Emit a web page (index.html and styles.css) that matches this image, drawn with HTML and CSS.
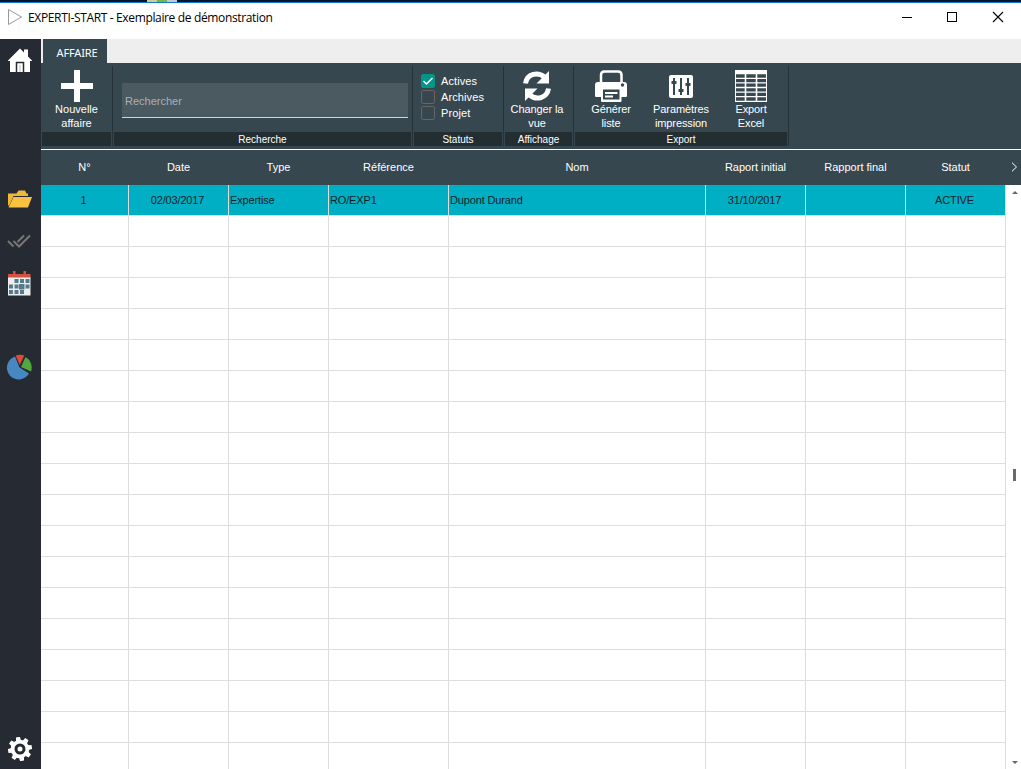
FILE: index.html
```html
<!DOCTYPE html>
<html lang="fr">
<head>
    <meta charset="UTF-8">
    <title>EXPERTI-START - Exemplaire de démonstration</title>
    <link rel="stylesheet" href="styles.css">
</head>
<body>
    <div class="desktop-edge"><i class="edge-sand"></i><i class="edge-green"></i><i class="edge-grey"></i></div>
    <header class="titlebar">
        <svg class="app-icon" width="16" height="18" viewBox="0 0 16 18"><path d="M1.500 1.500V16.500L14.500 9Z" fill="#fff" stroke="#999"/></svg>
        <span class="title">EXPERTI-START - Exemplaire de démonstration</span>
        <svg class="window-buttons" width="102" height="12" viewBox="0 0 102 12" fill="none" stroke="#000">
            <path d="M0 6.500H10M45.500 1.500H54.500V10.500H45.500Z" shape-rendering="crispEdges"/>
            <path d="M91 1L101 11M101 1L91 11" stroke-width="1.100"/>
        </svg>
    </header>
    <div class="window">
        <nav class="sidebar">
            <svg class="nav-home" width="24" height="24" viewBox="0 0 24 24">
                <path d="M0 12.500L12 .5L16 4.500V1.500H20V8.500L24 12.500V13H22V24H2V13H0Z" fill="#fff"/>
                <path d="M8.500 24V14.500H15.500V24" fill="#fff" stroke="#262a33" stroke-width="1.500"/>
                <path d="M11 17H13V24H11Z" fill="#ddd"/>
            </svg>
            <svg class="nav-folder" width="26" height="18" viewBox="0 0 26 18">
                <path d="M1 15V3.500H9.500L11.500 .5H18L19.500 3.500H21V6H6.500L2 16Z" fill="#efb936"/>
                <path d="M6.500 7H25L21 17.500H1.500Z" fill="#f7c142"/>
            </svg>
            <svg class="nav-checks" width="24" height="14" viewBox="0 0 24 14" fill="none" stroke="#777" stroke-width="2">
                <path d="M1 7L6.500 12.500M6.500 7L12 12.500L23 1.500M10.500 8L17 1.500"/>
            </svg>
            <svg class="nav-calendar" width="23" height="25" viewBox="0 0 23 25">
                <path d="M0 6H22.500V24.500H0Z" fill="#eee"/>
                <path d="M0 3H22.500V6.500H0ZM5 0H7.500V3H5ZM15.500 0H18V3H15.500Z" fill="#d15241"/>
                <path d="M6.500 8H10.500V12H6.500ZM12 8H16V12H12ZM17.500 8H21.500V12H17.500ZM1 13.500H5V17.500H1ZM6.500 13.500H10.500V17.500H6.500ZM11 13H16.500V18.500H11ZM17.500 13.500H21.500V17.500H17.500ZM1 19H5V23H1ZM6.500 19H10.500V23H6.500ZM12 19H16V23H12Z" fill="#557a8c"/>
            </svg>
            <svg class="nav-stats" width="26" height="26" viewBox="0 0 26 26">
                <path d="M12.500 13.500L8 2.500A11.800 11.800 0 1 0 22 19.500Z" fill="#4788c2"/>
                <path d="M12.700 11L8.700 1.500Q13 -.2 17.300 1.500Z" fill="#e34935"/>
                <path d="M14 13L18.500 3A12 12 0 0 1 24 17.500Z" fill="#50a83e"/>
            </svg>
            <svg class="nav-settings" width="24" height="24" viewBox="-12 -12 24 24">
                <g fill="#fff">
                    <circle r="9.300"/>
                    <path id="cog" d="M-2.500 -8L-2 -12H2L2.500 -8V8L2 12H-2L-2.500 8Z" transform="rotate(-10)"/>
                    <use href="#cog" transform="rotate(45)"/>
                    <use href="#cog" transform="rotate(90)"/>
                    <use href="#cog" transform="rotate(135)"/>
                </g>
                <circle r="4" fill="none" stroke="#262a33" stroke-width="3"/>
            </svg>
        </nav>
        <main class="content">
            <div class="tabs"><div class="tab">AFFAIRE</div></div>
            <div class="ribbon">
                <section class="group group-new">
                    <div class="group-body">
                        <button class="tool">
                            <svg width="32" height="32" viewBox="0 0 32 32"><path d="M13 0H19V13H32V19H19V32H13V19H0V13H13Z" fill="#fff"/></svg>
                            <span>Nouvelle<br>affaire</span>
                        </button>
                    </div>
                    <div class="group-name"></div>
                </section>
                <section class="group group-search">
                    <div class="group-body"><input class="search" type="text" placeholder="Rechercher"></div>
                    <div class="group-name">Recherche</div>
                </section>
                <section class="group group-status">
                    <div class="group-body">
                        <label class="check"><i class="box checked"><svg width="12" height="12" viewBox="0 0 12 12"><path d="M1.500 6L4.500 9L10.500 3" fill="none" stroke="#fff" stroke-width="1.500"/></svg></i>Actives</label>
                        <label class="check"><i class="box"></i>Archives</label>
                        <label class="check"><i class="box"></i>Projet</label>
                    </div>
                    <div class="group-name">Statuts</div>
                </section>
                <section class="group group-view">
                    <div class="group-body">
                        <button class="tool">
                            <svg width="32" height="32" viewBox="0 0 32 32">
                                <g id="half"><path d="M4.500 13.500C6 3.500 17 1.500 23.500 7" fill="none" stroke="#fff" stroke-width="5"/><path d="M28 1V13.500H15.500Z" fill="#fff"/></g>
                                <use href="#half" transform="rotate(180 16 16)"/>
                            </svg>
                            <span>Changer la<br>vue</span>
                        </button>
                    </div>
                    <div class="group-name">Affichage</div>
                </section>
                <section class="group group-export">
                    <div class="group-body">
                        <button class="tool">
                            <svg width="32" height="32" viewBox="0 0 32 32">
                                <path d="M6 13V5Q6 1.500 9.500 1.500H23Q26.500 1.500 26.500 5V13" fill="none" stroke="#fff" stroke-width="2.500"/>
                                <path d="M3 12H29Q32 12 32 15V26Q32 27 31 27H26.500V31Q26.500 32 25.500 32H7Q6 32 6 31V27H1Q0 27 0 26V15Q0 12 3 12Z" fill="#fff"/>
                                <path d="M8 19.500H24.500V29.500H8Z" fill="#37474f"/>
                                <path d="M10 22H22.500V24H10ZM10 25.500H18V27.500H10Z" fill="#fff"/>
                                <circle cx="27.500" cy="15" r="1.700" fill="#37474f"/>
                            </svg>
                            <span>Générer<br>liste</span>
                        </button>
                        <button class="tool">
                            <svg width="32" height="32" viewBox="0 0 32 32">
                                <rect x="4" y="5" width="24" height="23" rx="2" fill="#fff"/>
                                <path d="M9 8V25M16 8V25M23 8V25" stroke="#37474f" stroke-width="2"/>
                                <path d="M6.500 12.500H11.500M13.500 20.500H18.500M20.500 14.500H25.500" stroke="#37474f" stroke-width="3"/>
                            </svg>
                            <span>Paramètres<br>impression</span>
                        </button>
                        <button class="tool">
                            <svg width="32" height="32" viewBox="0 0 32 32">
                                <path d="M0 0H32V32H0Z" fill="#fff"/>
                                <path d="M1 6H31M1 10.600H31M1 15.200H31M1 19.800H31M1 24.400H31M1 29H31" stroke="#37474f" stroke-width="3.300"/>
                                <path d="M10.500 4V32M21.500 4V32" stroke="#fff" stroke-width="1.600"/>
                            </svg>
                            <span>Export<br>Excel</span>
                        </button>
                    </div>
                    <div class="group-name">Export</div>
                </section>
            </div>
            <div class="list">
                <table class="cases">
                    <colgroup>
                        <col class="col-num"><col class="col-md"><col class="col-md"><col class="col-ref">
                        <col class="col-name"><col class="col-md"><col class="col-md"><col class="col-md">
                    </colgroup>
                    <thead>
                        <tr><th>N°</th><th>Date</th><th>Type</th><th>Référence</th><th>Nom</th><th>Raport initial</th><th>Rapport final</th><th>Statut</th></tr>
                    </thead>
                    <tbody id="rows">
                        <tr class="selected"><td class="mid">1</td><td class="mid">02/03/2017</td><td>Expertise</td><td>RO/EXP1</td><td>Dupont Durand</td><td class="mid">31/10/2017</td><td></td><td class="mid">ACTIVE</td></tr>
                    </tbody>
                </table>
                <div class="scroll">
                    <div class="scroll-head"><svg width="7" height="10" viewBox="0 0 7 10"><path d="M1 .7L5.500 5L1 9.300" fill="none" stroke="#fff"/></svg></div>
                    <div class="scroll-track">
                        <i class="arrow-up"></i>
                        <i class="thumb"></i>
                        <i class="arrow-down"></i>
                    </div>
                </div>
            </div>
        </main>
    </div>
    <script>
        // fill the rest of the list with empty rows
        const rows = document.getElementById('rows');
        for (let i = 0; i < 18; i++) {
            const row = rows.insertRow();
            for (let j = 0; j < 8; j++) {
                row.insertCell();
            }
        }
    </script>
</body>
</html>
```
FILE: styles.css
```css
* {
    box-sizing: border-box;
}
body {
    margin: 0;
    height: 769px;
    overflow: hidden;
    background: #fff;
    font-family: "Liberation Sans", Arial, sans-serif;
    font-size: 11px;
    display: flex;
    flex-direction: column;
}
svg {
    display: block;
    flex: none;
}
.desktop-edge {
    height: 3px;
    flex: none;
    display: flex;
    padding-left: 147px;
    background: #03142c;
    border-bottom: 1px solid #0f7bd0;
}
.desktop-edge i {
    height: 2px;
    width: 10px;
}
.edge-sand { background: #d9cb8f; }
.edge-green { background: #77b843; }
.edge-grey { background: #c3c9d0; }
.titlebar {
    height: 36px;
    flex: none;
    display: flex;
    align-items: flex-start;
    padding: 5px 17px 0 7px;
}
.title {
    margin: 1px 0 0 5px;
    font: 12px/17px "Open Sans", "Noto Sans", sans-serif;
    letter-spacing: -0.35px;
    color: #000;
}
.window-buttons {
    margin: 3px 0 0 auto;
}
.window {
    flex: 1;
    min-height: 0;
    display: flex;
}
.sidebar {
    width: 41px;
    flex: none;
    background: #262a33;
    display: flex;
    flex-direction: column;
    padding: 9px 0 8px 7px;
}
.nav-home { margin-left: 1px; }
.nav-folder { margin-top: 118px; }
.nav-checks { margin-top: 26px; }
.nav-calendar { margin: 23px 0 0 1px; }
.nav-stats { margin-top: 58px; }
.nav-settings { margin: auto 0 0 1px; }
.content {
    flex: 1;
    min-width: 0;
    display: flex;
    flex-direction: column;
}
.tabs {
    height: 24px;
    flex: none;
    background: #eee;
    padding-left: 2px;
}
.tab {
    width: 64px;
    height: 24px;
    padding-left: 4px;
    background: #37474f;
    color: #fff;
    font: 11px/28px "Noto Sans", sans-serif;
    letter-spacing: -0.15px;
    text-align: center;
}
.ribbon {
    height: 87px;
    flex: none;
    display: flex;
    padding: 3px 0 3px 1px;
    background: #37474f;
    border-bottom: 1px solid #fff;
    color: #fff;
}
.group {
    display: flex;
    flex-direction: column;
    height: 80px;
    padding-right: 1px;
    margin-right: 1px;
    border-right: 1px solid #263238;
}
.group-new { width: 71px; }
.group-search { width: 299px; }
.group-status { width: 90px; }
.group-view { width: 69px; }
.group-export { width: 214px; }
.group-body {
    height: 66px;
    flex: none;
    display: flex;
}
.group-name {
    height: 14px;
    background: #232e33;
    font-size: 10px;
    line-height: 16px;
    text-align: center;
}
.tool {
    flex: 1;
    display: flex;
    flex-direction: column;
    align-items: center;
    padding: 4px 0 0;
    border: 0;
    background: none;
    color: #fff;
    font: 11px/14px "Liberation Sans", Arial, sans-serif;
    white-space: nowrap;
}
.group-view .tool {
    padding-right: 3px;
    letter-spacing: -0.1px;
}
.group-export .group-body {
    padding-left: 1px;
}
.group-export .tool {
    flex: 0 0 70px;
    letter-spacing: -0.1px;
}
.search {
    width: 286px;
    height: 35px;
    margin: 17px 0 0 8px;
    padding: 2px 3px 0;
    border: 0;
    border-bottom: 1px solid #cfd3d5;
    background: #4b5961;
    font: 11px "Liberation Sans", Arial, sans-serif;
    color: #fff;
}
.search::placeholder {
    color: #abb0b2;
    opacity: 1;
}
.group-status .group-body {
    flex-direction: column;
    padding: 7px 0 0 7px;
}
.check {
    height: 16px;
    display: flex;
    align-items: center;
    gap: 6px;
    letter-spacing: 0.1px;
}
.box {
    width: 14px;
    height: 14px;
    border: 1px solid #68665f;
    border-radius: 2px;
}
.box.checked {
    border-color: #009688;
    background: #009688;
}
.list {
    flex: 1;
    min-height: 0;
    display: flex;
    overflow: hidden;
}
.cases {
    width: 965px;
    flex: none;
    align-self: flex-start;
    table-layout: fixed;
    border-collapse: separate;
    border-spacing: 0;
}
.col-num { width: 88px; }
.col-md { width: 100px; }
.col-ref { width: 120px; }
.col-name { width: 257px; }
.cases th {
    height: 35px;
    padding: 0 1px 2px 0;
    background: #37474f;
    color: #fff;
    font-weight: normal;
}
.cases td {
    height: 31px;
    padding: 0 1px;
    border: 0 solid #ddd;
    border-width: 0 1px 1px 0;
    color: #16232a;
    letter-spacing: -0.15px;
}
.cases .selected td {
    background: #00afc3;
}
.cases .mid {
    padding-right: 3px;
    text-align: center;
}
.scroll {
    flex: 1;
    display: flex;
    flex-direction: column;
}
.scroll-head {
    height: 35px;
    flex: none;
    padding: 12px 0 0 5px;
    background: #37474f;
}
.scroll-track {
    flex: 1;
    display: flex;
    flex-direction: column;
    justify-content: space-between;
    padding: 6px 0 5px 6px;
}
.arrow-up,
.arrow-down {
    width: 0;
    border: 3px solid transparent;
}
.arrow-up {
    border-top: 0;
    border-bottom-color: #666;
}
.arrow-down {
    border-bottom: 0;
    border-top-color: #666;
}
.thumb {
    width: 3px;
    height: 12px;
    margin: 0 0 5px 1px;
    background: #6a6a6a;
}
```
